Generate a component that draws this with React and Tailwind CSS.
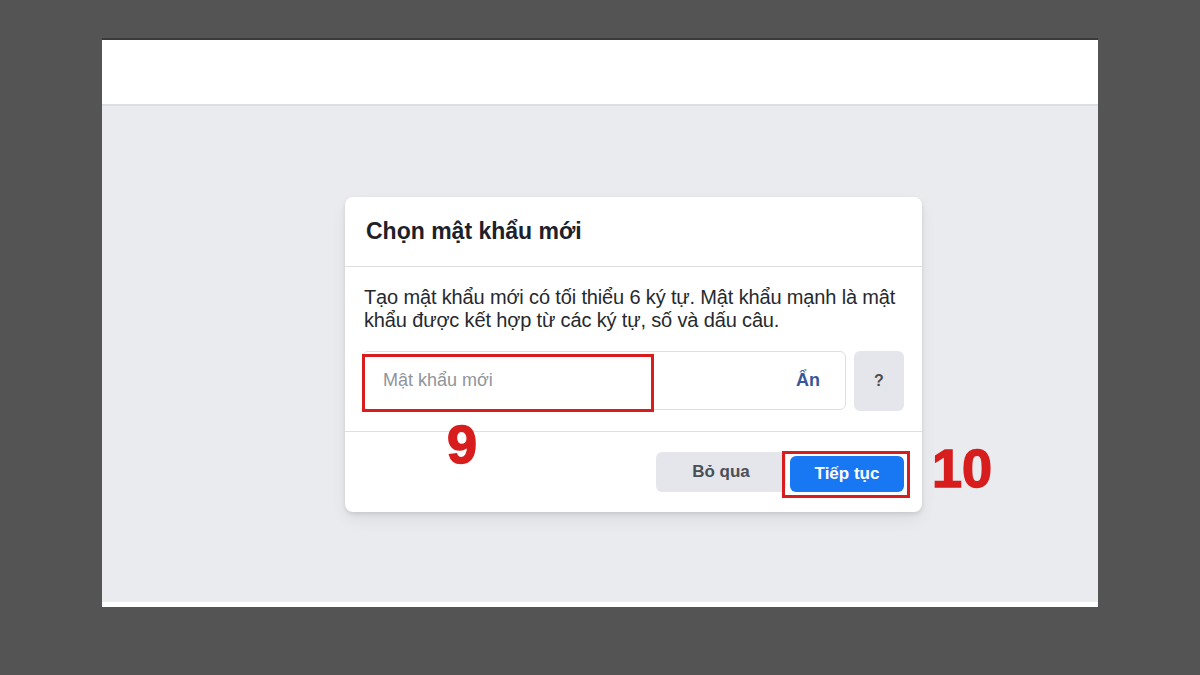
export default function App() {
  return (
    <div className="w-[1200px] h-[675px] bg-[#545454] pt-[38px] px-[102px] font-['Liberation_Sans',Arial,sans-serif]">
      <div className="h-[569px] flex flex-col border-t-2 border-[#3a3a3a]">
        <div className="h-[66px] bg-white border-b-2 border-[#dcdee2]" />
        <div className="flex-1 bg-[#e9ebee] pt-[91px] pl-[243px]">
          <div className="w-[577px] bg-white rounded-lg shadow-[0_2px_4px_rgba(0,0,0,0.1),0_8px_16px_rgba(0,0,0,0.06)]">
            <div className="h-[70px] flex items-center px-[21px] border-b border-[#dddfe2]">
              <h2 className="text-[23px] font-bold text-[#1d2129]">Chọn mật khẩu mới</h2>
            </div>

            <div className="px-[17px] pt-[19px] pb-[20px] border-b border-[#dddfe2]">
              <p className="text-[20px] tracking-[-0.15px] leading-[23px] text-[#26292e] pl-[2px]">
                Tạo mật khẩu mới có tối thiểu 6 ký tự. Mật khẩu mạnh là mật khẩu được kết hợp từ các ký tự, số và dấu câu.
              </p>
              <div className="mt-[19px] flex gap-[8px]">
                <div className="relative w-[484px] h-[59px] border border-[#dddfe2] rounded-md flex items-center justify-between pl-[20px] pr-[25px]">
                  <span className="text-[18px] text-[#90949c]">Mật khẩu mới</span>
                  <span className="text-[18px] font-bold text-[#385898]">Ẩn</span>
                  <div className="absolute left-[-1px] top-[2px] w-[292px] h-[58px] border-[3px] border-[#d71d1d]" />
                  <span className="absolute left-[84px] top-[65px] text-[54px] leading-none font-bold text-[#d71d1d] [-webkit-text-stroke:1.5px_#d71d1d]">9</span>
                </div>
                <div className="w-[50px] h-[60px] bg-[#e4e6eb] rounded-md flex items-center justify-center text-[16px] font-bold text-[#4b4f56]">
                  ?
                </div>
              </div>
            </div>

            <div className="h-[80px] flex items-center justify-end gap-[4px] pr-[18px]">
              <button className="w-[130px] h-[40px] bg-[#e4e6eb] rounded-md text-[17px] font-bold text-[#4b4f56]">
                Bỏ qua
              </button>
              <div className="relative">
                <button className="w-[114px] h-[36px] mt-[4px] bg-[#1877f2] rounded-md text-[17px] font-bold text-white">
                  Tiếp tục
                </button>
                <div className="absolute left-[-8px] top-[-1px] w-[128px] h-[47px] border-[3px] border-[#d71d1d]" />
                <span className="absolute left-[142px] top-[-11px] text-[54px] leading-none font-bold text-[#d71d1d] [-webkit-text-stroke:1.5px_#d71d1d]">10</span>
              </div>
            </div>
          </div>
        </div>
        <div className="h-[5px] bg-white" />
      </div>
    </div>
  );
}
